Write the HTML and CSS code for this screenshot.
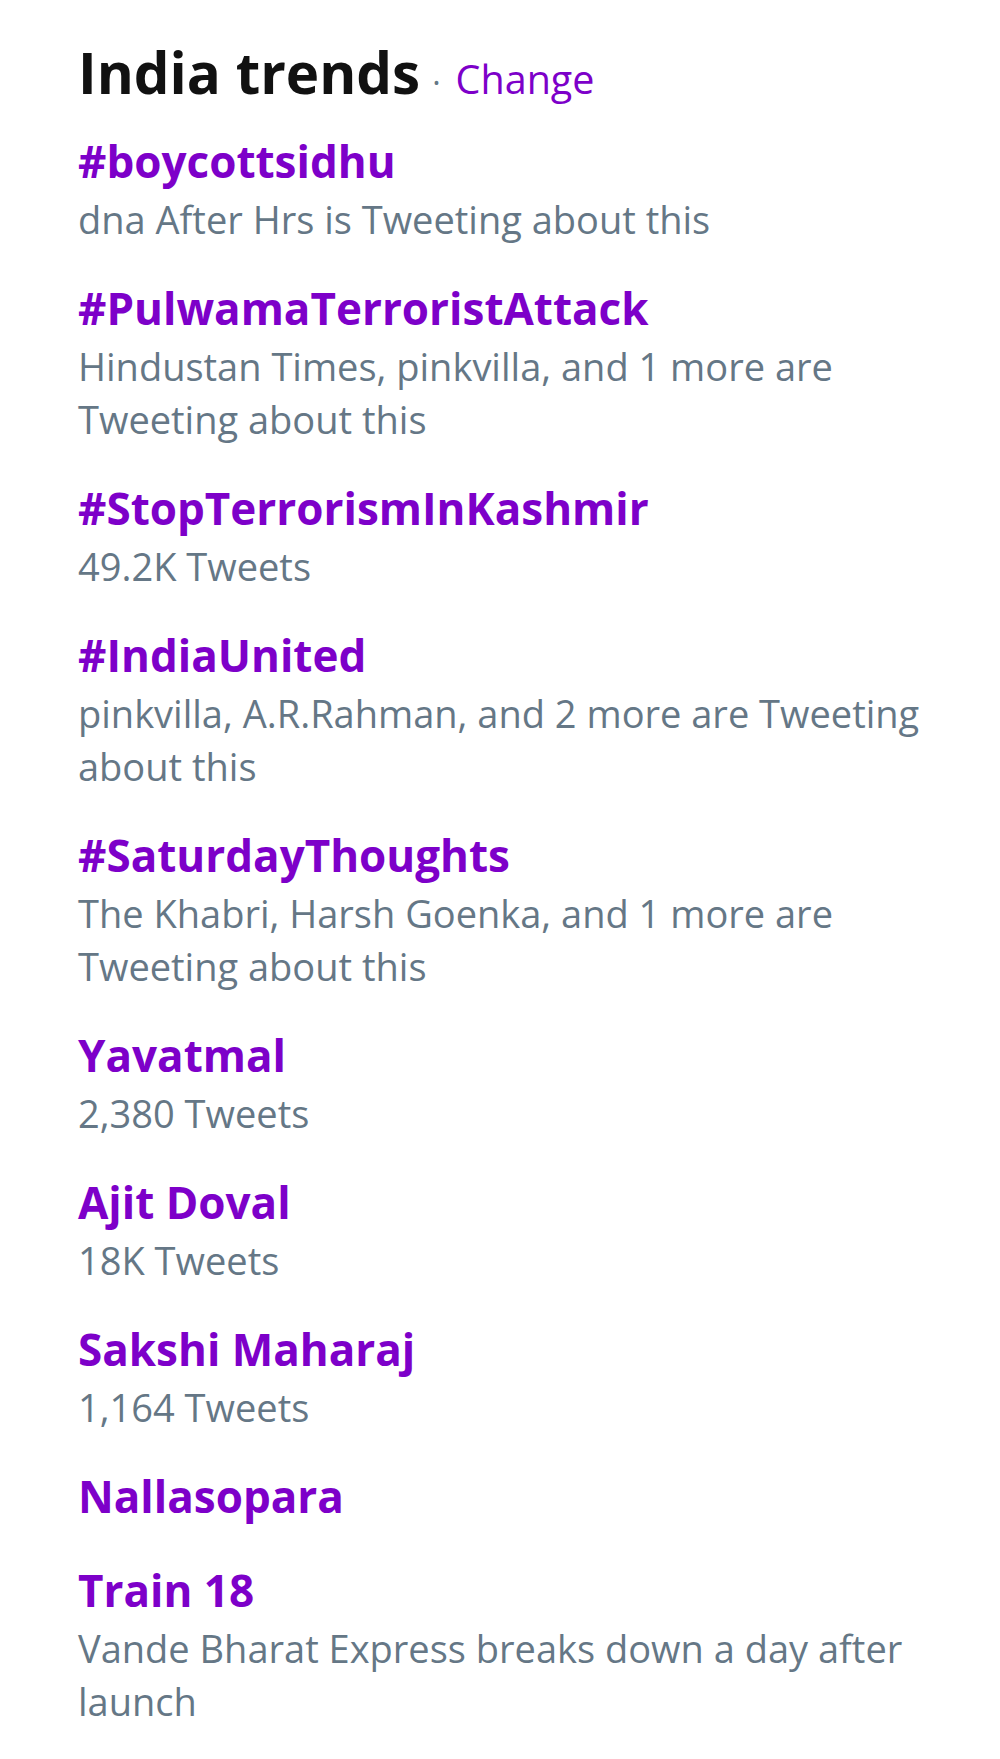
FILE: index.html
```html
<!DOCTYPE html>
<html lang="en">
<head>
<meta charset="utf-8">
<title>India trends</title>
<link rel="stylesheet" href="styles.css">
</head>
<body>
<div class="panel">
  <div class="header">
    <h3 class="title">India trends</h3>
    <span class="sep">·</span>
    <a class="change" href="#">Change</a>
  </div>
  <ul class="trends">
    <li class="trend">
      <a class="name" href="#">#boycottsidhu</a>
      <div class="meta">dna After Hrs is Tweeting about this</div>
    </li>
    <li class="trend">
      <a class="name" href="#">#PulwamaTerroristAttack</a>
      <div class="meta">Hindustan Times, pinkvilla, and 1 more are Tweeting about this</div>
    </li>
    <li class="trend">
      <a class="name" href="#">#StopTerrorismInKashmir</a>
      <div class="meta">49.2K Tweets</div>
    </li>
    <li class="trend">
      <a class="name" href="#">#IndiaUnited</a>
      <div class="meta">pinkvilla, A.R.Rahman, and 2 more are Tweeting about this</div>
    </li>
    <li class="trend">
      <a class="name" href="#">#SaturdayThoughts</a>
      <div class="meta">The Khabri, Harsh Goenka, and 1 more are Tweeting about this</div>
    </li>
    <li class="trend">
      <a class="name" href="#">Yavatmal</a>
      <div class="meta">2,380 Tweets</div>
    </li>
    <li class="trend">
      <a class="name" href="#">Ajit Doval</a>
      <div class="meta">18K Tweets</div>
    </li>
    <li class="trend">
      <a class="name" href="#">Sakshi Maharaj</a>
      <div class="meta">1,164 Tweets</div>
    </li>
    <li class="trend">
      <a class="name" href="#">Nallasopara</a>
    </li>
    <li class="trend">
      <a class="name" href="#">Train 18</a>
      <div class="meta">Vande Bharat Express breaks down a day after launch</div>
    </li>
  </ul>
</div>
</body>
</html>
```
FILE: styles.css
```css
html, body {
  margin: 0;
  padding: 0;
  background: #ffffff;
}

body {
  font-family: "Open Sans", "Noto Sans", sans-serif;
}

.panel {
  padding: 40px 0 0 78px;
  width: 880px;
}

.header {
  display: flex;
  align-items: baseline;
  margin-bottom: 23px;
}

.title {
  margin: 0;
  font-size: 56.5px;
  line-height: 66px;
  font-weight: 700;
  color: #111111;
}

.sep {
  font-size: 32px;
  color: #657786;
  margin: 0 15px 0 12px;
}

.change {
  font-size: 39.5px;
  color: #7d00c9;
  text-decoration: none;
}

.trends {
  list-style: none;
  margin: 0;
  padding: 0;
}

.trend {
  padding-bottom: 30px;
}

.name {
  display: block;
  font-size: 44px;
  line-height: 64px;
  font-weight: 700;
  color: #7d00c9;
  text-decoration: none;
}

.meta {
  font-size: 38px;
  line-height: 53px;
  color: #657786;
}
```
